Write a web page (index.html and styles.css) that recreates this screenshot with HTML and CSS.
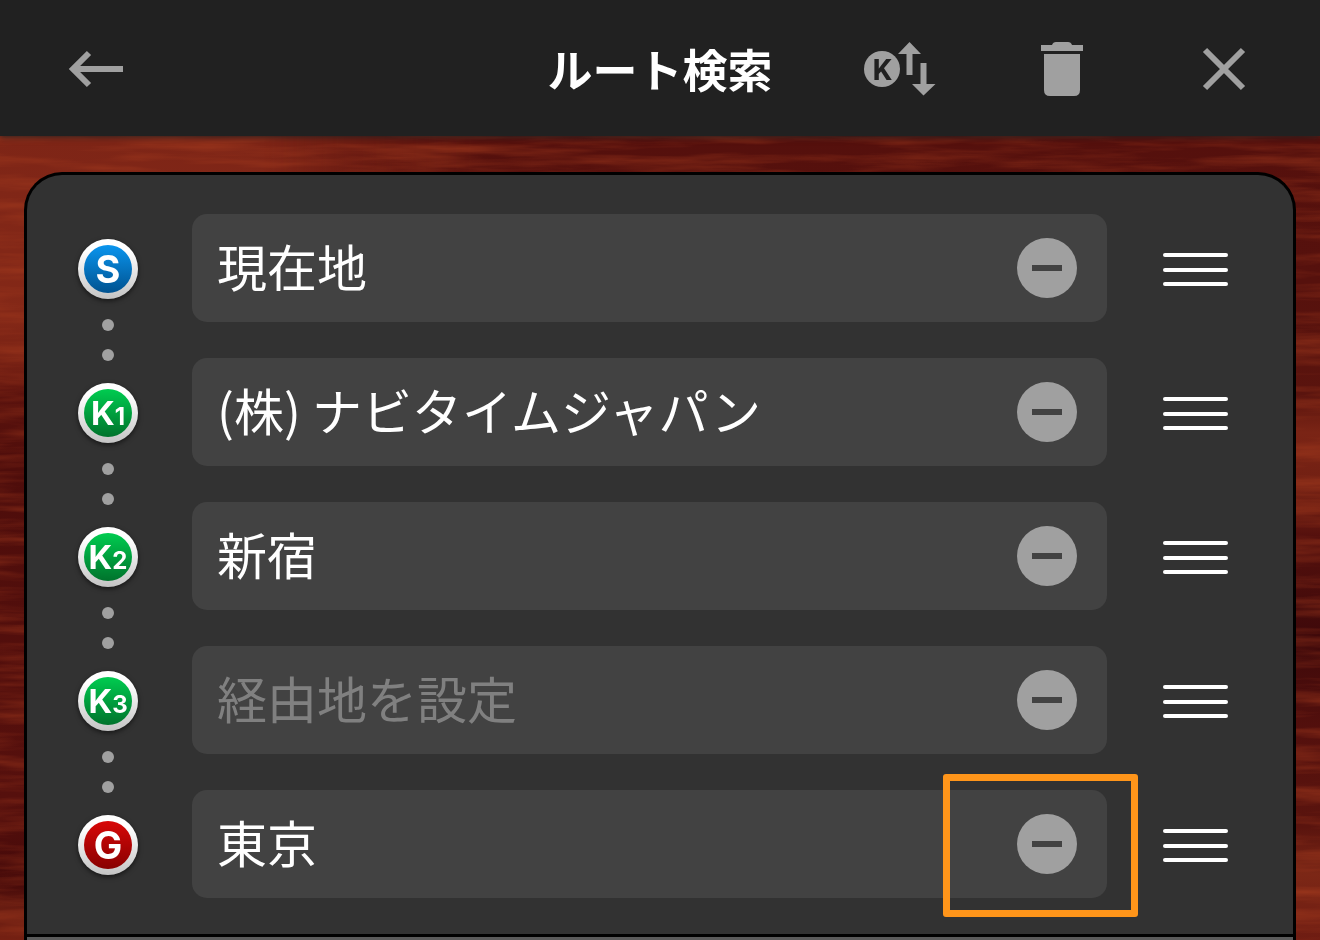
FILE: index.html
```html
<!DOCTYPE html>
<html lang="ja">
<head>
<meta charset="utf-8">
<meta name="viewport" content="width=device-width, initial-scale=1">
<title>ルート検索</title>
<link rel="stylesheet" href="styles.css">
</head>
<body>
<svg class="wood" aria-hidden="true">
  <defs>
    <linearGradient id="wood-left" x1="0" y1="0" x2="0" y2="1">
      <stop offset="0" stop-color="#782214"/>
      <stop offset=".2" stop-color="#802617"/>
      <stop offset=".34" stop-color="#842817"/>
      <stop offset=".4" stop-color="#701d12"/>
      <stop offset=".42" stop-color="#5a120d"/>
      <stop offset=".5" stop-color="#4e0d0b"/>
      <stop offset=".85" stop-color="#56100d"/>
      <stop offset=".94" stop-color="#440909"/>
      <stop offset=".97" stop-color="#6c1e12"/>
      <stop offset="1" stop-color="#742012"/>
    </linearGradient>
    <linearGradient id="wood-right" x1="0" y1="0" x2="0" y2="1">
      <stop offset="0" stop-color="#540f0c"/>
      <stop offset=".3" stop-color="#56110d"/>
      <stop offset=".42" stop-color="#5a140e"/>
      <stop offset=".46" stop-color="#7a2415"/>
      <stop offset=".54" stop-color="#6e1e12"/>
      <stop offset=".57" stop-color="#54100d"/>
      <stop offset=".68" stop-color="#3e090a"/>
      <stop offset=".78" stop-color="#54100d"/>
      <stop offset=".88" stop-color="#5a140e"/>
      <stop offset=".93" stop-color="#7c2716"/>
      <stop offset="1" stop-color="#6e1c12"/>
    </linearGradient>
    <linearGradient id="wood-fade" x1="0" y1="0" x2="1" y2="0">
      <stop offset=".2" stop-color="#fff" stop-opacity="0"/>
      <stop offset=".36" stop-color="#fff"/>
    </linearGradient>
    <mask id="wood-mask"><rect width="100%" height="100%" fill="url(#wood-fade)"/></mask>
    <filter id="grain" x="0" y="0" width="100%" height="100%" color-interpolation-filters="sRGB">
      <feTurbulence type="fractalNoise" baseFrequency="0.008 0.09" numOctaves="4" seed="7"/>
      <feColorMatrix values="0 0 0 0 .66  0 0 0 0 .24  0 0 0 0 .12  1.1 0 0 0 -.44"/>
    </filter>
  </defs>
  <rect width="100%" height="100%" fill="url(#wood-left)"/>
  <rect width="100%" height="100%" fill="url(#wood-right)" mask="url(#wood-mask)"/>
  <rect width="100%" height="100%" filter="url(#grain)"/>
</svg>

<header class="bar">
  <button class="tool" type="button" aria-label="戻る">
    <svg width="72" height="72" viewBox="0 0 72 72"><path d="M63 36H15M29 20L13 36L29 52" class="line"/></svg>
  </button>
  <h1 class="title">ルート検索</h1>
  <div class="tools">
    <button class="tool" type="button" aria-label="経由地の並べ替え">
      <svg width="72" height="72" viewBox="0 0 72 72">
        <circle cx="18" cy="36" r="18" class="solid"/>
        <text x="18" y="47" class="tool-letter">K</text>
        <path class="solid" d="M45.500 9L57 21H48.500V42H42.500V21H34zM56.500 30H62.500V51H71.500L59.500 62.500L48 51H56.500z"/>
      </svg>
    </button>
    <button class="tool" type="button" aria-label="削除">
      <svg width="72" height="72" viewBox="0 0 72 72"><path class="solid" d="M15 12H26Q27 9 30 9H42Q45 9 46 12H57V18H15zM18 21H54V57Q54 63 48 63H24Q18 63 18 57z"/></svg>
    </button>
    <button class="tool" type="button" aria-label="閉じる">
      <svg width="72" height="72" viewBox="0 0 72 72"><path d="M17 17L55 55M55 17L17 55" class="line"/></svg>
    </button>
  </div>
</header>

<main class="panel">
  <ol class="route">
    <li class="stop">
      <div class="marker"><label class="badge badge-start" for="p0">S</label><i class="dot"></i><i class="dot"></i></div>
      <div class="field"><input id="p0" type="text" value="現在地"><button class="remove" type="button" aria-label="削除"></button></div>
      <button class="handle" type="button" aria-label="並べ替え"><i></i><i></i><i></i></button>
    </li>
    <li class="stop">
      <div class="marker"><label class="badge badge-via" for="p1">K<small>1</small></label><i class="dot"></i><i class="dot"></i></div>
      <div class="field"><input id="p1" type="text" value="(株) ナビタイムジャパン"><button class="remove" type="button" aria-label="削除"></button></div>
      <button class="handle" type="button" aria-label="並べ替え"><i></i><i></i><i></i></button>
    </li>
    <li class="stop">
      <div class="marker"><label class="badge badge-via" for="p2">K<small>2</small></label><i class="dot"></i><i class="dot"></i></div>
      <div class="field"><input id="p2" type="text" value="新宿"><button class="remove" type="button" aria-label="削除"></button></div>
      <button class="handle" type="button" aria-label="並べ替え"><i></i><i></i><i></i></button>
    </li>
    <li class="stop">
      <div class="marker"><label class="badge badge-via" for="p3">K<small>3</small></label><i class="dot"></i><i class="dot"></i></div>
      <div class="field"><input id="p3" type="text" placeholder="経由地を設定"><button class="remove" type="button" aria-label="削除"></button></div>
      <button class="handle" type="button" aria-label="並べ替え"><i></i><i></i><i></i></button>
    </li>
    <li class="stop">
      <div class="marker"><label class="badge badge-goal" for="p4">G</label></div>
      <div class="field focus"><input id="p4" type="text" value="東京"><button class="remove" type="button" aria-label="削除"></button></div>
      <button class="handle" type="button" aria-label="並べ替え"><i></i><i></i><i></i></button>
    </li>
  </ol>
  <div class="next-section"></div>
</main>
</body>
</html>
```
FILE: styles.css
```css
*, *::before, *::after { box-sizing: border-box; }

body {
  margin: 0;
  min-height: 100vh;
  display: flex;
  flex-direction: column;
  background: #5e150e;
  color: #fff;
  font-family: "Noto Sans CJK JP", sans-serif;
}

button {
  padding: 0;
  border: 0;
  background: none;
  cursor: pointer;
}

.wood {
  position: fixed;
  inset: 0;
  z-index: -1;
  width: 100%;
  height: 100%;
}

.bar {
  display: grid;
  grid-template-columns: 1fr auto 1fr;
  align-items: center;
  height: 136px;
  padding: 2px 60px 0;
  background: #212121;
  box-shadow: 0 1px 6px rgba(33, 33, 33, .9);
}

.title {
  margin: 0;
  font-size: 45px;
  line-height: 60px;
  font-weight: 700;
}

.tools {
  display: flex;
  justify-content: flex-end;
  gap: 90px;
}

.tool { width: 72px; height: 72px; }
.tool svg { display: block; }
.line { fill: none; stroke: #a0a0a0; stroke-width: 6; }
.solid { fill: #a0a0a0; }
.tool-letter {
  fill: #212121;
  font: 700 30px Roboto, sans-serif;
  text-anchor: middle;
}

.panel {
  flex: 1;
  display: flex;
  flex-direction: column;
  margin: 36px 24px 0;
  border: 3px solid #000;
  border-bottom: 0;
  border-radius: 38px 38px 0 0;
  background: #323232;
  overflow: hidden;
}

.route {
  display: flex;
  flex-direction: column;
  gap: 36px;
  margin: 0;
  padding: 39px 65px 36px 51px;
  list-style: none;
}

.stop {
  display: grid;
  grid-template-columns: 60px 1fr 65px;
  align-items: center;
  height: 108px;
}

/* The dots run into the gap below the row. */
.marker {
  align-self: start;
  display: flex;
  flex-direction: column;
  align-items: center;
  gap: 18px;
  margin: 25px 0 -39px;
}

.badge {
  display: flex;
  align-items: baseline;
  justify-content: center;
  width: 60px;
  height: 60px;
  margin-bottom: 2px;
  border: 6px solid transparent;
  border-radius: 50%;
  box-shadow: 0 2px 5px rgba(0, 0, 0, .55);
  font: 700 38px/48px Inter, sans-serif;
}

.badge small { font-size: 24px; }
.badge-start { background: linear-gradient(#0a95ee, #005290) padding-box, linear-gradient(#fff 20%, #c4c4c4) border-box; }
.badge-via { background: linear-gradient(#00cc50, #00732c) padding-box, linear-gradient(#fff 20%, #c4c4c4) border-box; font-size: 33px; }
.badge-goal { background: linear-gradient(#d80808, #880000) padding-box, linear-gradient(#fff 20%, #c4c4c4) border-box; }

.dot {
  width: 12px;
  height: 12px;
  border-radius: 50%;
  background: #a0a0a0;
}

.field {
  position: relative;
  display: flex;
  align-items: center;
  height: 108px;
  margin: 0 56px 0 54px;
  padding: 0 30px 0 25px;
  border-radius: 15px;
  background: #424242;
}

.field input {
  flex: 1;
  min-width: 0;
  height: 82px;
  padding: 0 0 6px;
  border: 0;
  outline: 0;
  background: none;
  color: #fff;
  font: 400 50px/76px "Noto Sans CJK JP", sans-serif;
}

.field input::placeholder { color: #808080; opacity: 1; }

.remove {
  display: grid;
  place-items: center;
  width: 60px;
  height: 60px;
  border-radius: 50%;
  background: #a0a0a0;
}

.remove::before {
  content: "";
  width: 30px;
  height: 6px;
  background: #424242;
}

.focus::after {
  content: "";
  position: absolute;
  top: -16px;
  right: -31px;
  width: 195px;
  height: 143px;
  border: 7px solid #ff951a;
  border-radius: 3px;
  pointer-events: none;
}

.handle {
  display: flex;
  flex-direction: column;
  gap: 10px;
  padding-top: 2px;
}

.handle i {
  width: 65px;
  height: 4px;
  border-radius: 2px;
  background: #fff;
}
.handle i:first-child { margin-bottom: 1px; }

.next-section {
  flex: 1;
  border-top: 3px solid #000;
  background: #5a5a5a;
}
```
